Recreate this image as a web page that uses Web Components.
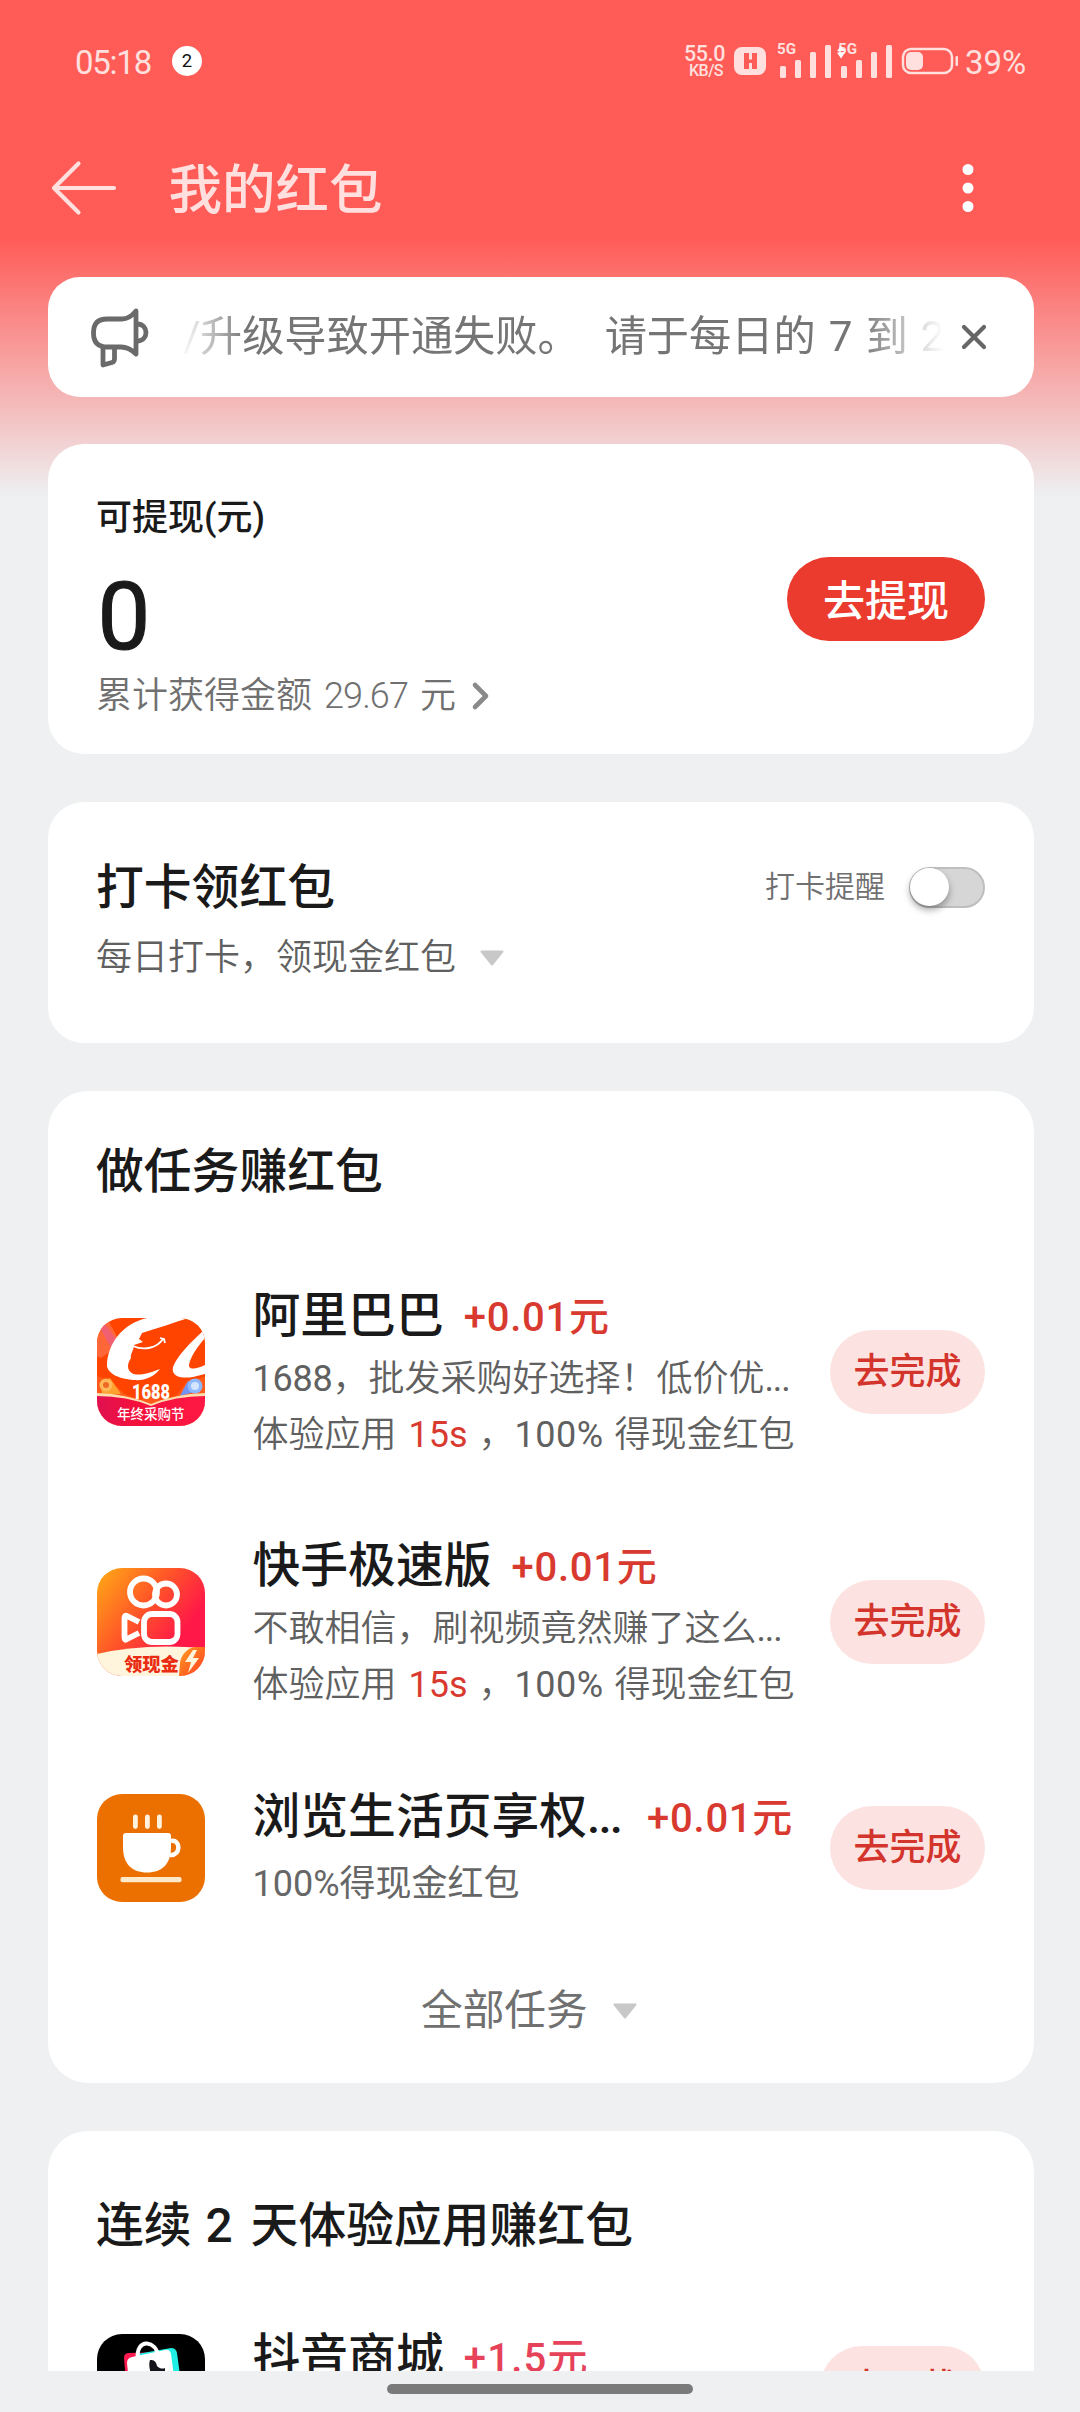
<!DOCTYPE html>
<html lang="zh-CN">
<head>
<meta charset="utf-8">
<title>我的红包</title>
<style>
html,body{margin:0;padding:0}
body{width:1080px;height:2412px;overflow:hidden;display:flex;flex-direction:column;
  font-family:Roboto,"Noto Sans CJK SC",sans-serif;color:#1a1a1a;
  background:linear-gradient(#ff5b57 0,#ff5b57 238px,#eef0f2 497px,#eef0f2 100%)}
main{flex:1;min-height:0;box-sizing:border-box;overflow:hidden;display:flex;flex-direction:column;gap:48px;padding:23px 46px 0 48px}
rp-notice{margin-bottom:-1px}
</style>
</head>
<body>
<rp-status-bar time="05:18" count="2" level="39%"></rp-status-bar>
<rp-title-bar>我的红包</rp-title-bar>
<main>
  <rp-notice></rp-notice>
  <rp-balance></rp-balance>
  <rp-checkin></rp-checkin>
  <rp-card style="height:992px;--top:51px">
    <span slot="heading">做任务赚红包</span>
    <rp-task icon="alibaba" style="margin-top:84px">
      <span slot="name">阿里巴巴</span><fit-text slot="amount" w="146">+0.01元</fit-text>
      <span slot="desc"><fit-text w="80">1688</fit-text>，批发采购好选择！低价优<fit-text w="25">...</fit-text></span>
      <span slot="rule">体验应用<fit-text w="12"> </fit-text><fit-text class="hot" w="59">15s</fit-text><fit-text w="11"> </fit-text>，<fit-text w="89">100%</fit-text><fit-text w="11"> </fit-text>得现金红包</span>
      <span slot="action">去完成</span>
    </rp-task>
    <rp-task icon="kuaishou" style="margin-top:78px">
      <span slot="name">快手极速版</span><fit-text slot="amount" w="146">+0.01元</fit-text>
      <span slot="desc">不敢相信，刷视频竟然赚了这么<fit-text w="25">...</fit-text></span>
      <span slot="rule">体验应用<fit-text w="12"> </fit-text><fit-text class="hot" w="59">15s</fit-text><fit-text w="11"> </fit-text>，<fit-text w="89">100%</fit-text><fit-text w="11"> </fit-text>得现金红包</span>
      <span slot="action">去完成</span>
    </rp-task>
    <rp-task icon="cup" compact style="margin-top:77px">
      <span slot="name">浏览生活页享权<fit-text w="34">...</fit-text><fit-text w="6"> </fit-text></span><fit-text slot="amount" w="146">+0.01元</fit-text>
      <span slot="desc"><fit-text w="87">100%</fit-text>得现金红包</span>
      <span slot="action">去完成</span>
    </rp-task>
    <rp-more>全部任务</rp-more>
  </rp-card>
  <rp-card style="height:992px;flex:none;--top:65px">
    <span slot="heading">连续<fit-text w="14"> </fit-text><fit-text w="32">2</fit-text><fit-text w="13"> </fit-text>天体验应用赚红包</span>
    <rp-task icon="bag" compact style="margin-top:69px;--amount:#e6425a;--pad:28.5px">
      <span slot="name">抖音商城</span><fit-text slot="amount" w="125">+1.5元</fit-text>
      <span slot="action">去下载</span>
    </rp-task>
  </rp-card>
</main>
<rp-nav></rp-nav>

<script>
class Base extends HTMLElement{
  constructor(){super();this.attachShadow({mode:'open'})}
  connectedCallback(){this.shadowRoot.innerHTML=`<style>:host,*{box-sizing:border-box}svg{display:block;flex:none}${this.css()}</style>${this.html()}`;this.ready&&this.ready()}
  css(){return ''} html(){return '<slot></slot>'}
}
const def=(n,c)=>customElements.define(n,c);

/* Inline run whose tracking is adjusted so that it occupies the width in "w". */
def('fit-text',class extends Base{
  css(){return `:host{display:inline-block;white-space:pre}`}
  ready(){
    const n=this.textContent.length,w=+this.getAttribute('w');
    const nat=this.getBoundingClientRect().width;
    this.style.letterSpacing=(w-nat)/n+'px';
  }
});

def('rp-status-bar',class extends Base{
  css(){return `:host{display:flex;align-items:center;height:122px;flex:none;padding:0 54px 0 75px;color:#ffe0de}
   .t{font-size:33px;line-height:40px;padding-top:4px}
   .n{width:30px;height:30px;border-radius:50%;background:#fff;color:#111;font-size:18.5px;line-height:31px;text-align:center;margin-left:20px}
   .sp{flex:1}.net{display:flex;flex-direction:column;align-items:flex-end;font-weight:500}
   .net b{font:500 21.5px/18px Roboto}.net i{font:500 16px/13px Roboto;padding:1px 2px 0 0}
   .h{margin-left:9px}.sig{margin-left:11px}.bat{margin-left:8px}.p{padding-top:4px;font-size:33px;line-height:40px;margin-left:6px}`}
  html(){
    const bars=x=>[[0,67],[15,61],[30,53],[45,46]].map(([d,y])=>`<rect x="${x+d}" y="${y-44}" width="6" height="${79-y}" rx="1.5"/>`).join('');
    return `<span class="t"><fit-text w="76">${this.getAttribute('time')}</fit-text></span><span class="n" style="margin-left:21px">${this.getAttribute('count')}</span><span class="sp"></span>
    <span class="net"><b><fit-text w="41">55.0</fit-text></b><i><fit-text w="34">KB/S</fit-text></i></span>
    <svg class="h" width="32" height="28" viewBox="0 0 32 28" fill="#ffe0de"><rect width="32" height="28" rx="8"/><path d="M10 6h5v6.500h3V6h5v16h-5v-6h-3v6h-5z" fill="#ff5b57"/></svg>
    <svg class="sig" width="116" height="36" viewBox="776 0 116 36" fill="#ffe0de">${bars(779)}${bars(840)}
     <text x="776" y="11" font-family="Roboto" font-weight="700" font-size="14.500" textLength="19" lengthAdjust="spacingAndGlyphs">5G</text>
     <text x="837" y="11" font-family="Roboto" font-weight="700" font-size="14.500" textLength="19" lengthAdjust="spacingAndGlyphs">5G</text>
     <path d="M840 3l4 5h-8zM836 9.500h8l-4 6z" fill="#fff"/></svg>
    <svg class="bat" width="58" height="28" viewBox="0 0 58 28" fill="#ffe0de"><rect x="2" y="2" width="49" height="24" rx="8" fill="none" stroke="#ffe0de" stroke-width="2.500"/><rect x="5" y="5" width="17" height="18" rx="5"/><rect x="54.500" y="9" width="2.500" height="10" rx="1"/></svg>
    <span class="p"><fit-text w="61">${this.getAttribute('level')}</fit-text></span>`}
});

def('rp-title-bar',class extends Base{
  css(){return `:host{display:flex;align-items:center;height:132px;flex:none;padding:0 104px 0 50px;color:#ffe0de}
   h1{margin:0 0 0 48.500px;font-size:53.500px;line-height:70px;font-weight:500;flex:1;padding-top:6px}`}
  html(){return `<svg width="70" height="56" viewBox="0 0 70 56" fill="none" stroke="#ffe0de" stroke-width="4.200" stroke-linecap="round" stroke-linejoin="round"><path d="M28.500 3.500L4 28l24.500 24.500M4 28h60"/></svg>
   <h1><slot></slot></h1><svg width="16" height="56" viewBox="0 0 16 56" fill="#fff"><circle cx="8" cy="9.500" r="5.500"/><circle cx="8" cy="28" r="5.500"/><circle cx="8" cy="46.500" r="5.500"/></svg>`}
});

def('rp-notice',class extends Base{
  css(){return `:host{display:flex;align-items:center;height:120px;flex:none;background:#fff;border-radius:32px;padding:0 45px 0 41px;color:#757575}
   .w{flex:1;margin:0 15px 0 30px;overflow:hidden;white-space:nowrap;font-size:42.200px;line-height:60px;padding-left:2px;
     -webkit-mask-image:linear-gradient(90deg,transparent 0,#000 65px,#000 calc(100% - 85px),transparent)}`}
  html(){return `<svg width="62" height="66" viewBox="0 0 62 66" fill="none" stroke="#6a6a6a" stroke-width="4.800" stroke-linejoin="round" stroke-linecap="round">
     <path d="M33 15H18C8 15 4.500 21 4.500 29s3.500 14 13.500 14h14c7 0 11 3 15 7V7c-4 5-8 8-14 8z"/><path d="M48 20c12 0 12 17 0 17M14 43.500V61l9-2.500c2-.6 2.500-2 2.500-4V44"/></svg>
   <div class="w"><fit-text w="17">/</fit-text>升级导致开通失败。<fit-text w="25"> </fit-text>请于每日的<fit-text w="13"> </fit-text><fit-text w="24">7</fit-text><fit-text w="13"> </fit-text>到<fit-text w="13"> </fit-text><fit-text w="24">2</fit-text></div>
   <svg width="30" height="30" viewBox="0 0 30 30" stroke="#666" stroke-width="4.200" stroke-linecap="round"><path d="M5 5l20 20M25 5L5 25"/></svg>`}
});

def('rp-card',class extends Base{
  css(){return `:host{display:block;flex:none;background:#fff;border-radius:40px;padding:var(--top) 49px 0 49px}
   .hd{font-size:47.800px;line-height:61px;height:60px;font-weight:500;white-space:nowrap;margin-left:-1px}`}
  html(){return `<div class="hd"><slot name="heading"></slot></div><slot></slot>`}
});

def('rp-pill',class extends Base{
  css(){return `:host{display:flex;align-items:center;justify-content:center;flex:none;height:84px;border-radius:42px;background:#fce3e1;color:#d3352c;font-size:36px;font-weight:500;line-height:40px;white-space:nowrap;padding:0 var(--pad,23.500px)}
   :host([solid]){background:#eb3a2e;color:#fff;font-size:42px;padding:6px 36px 0}`}
});

def('rp-caret',class extends Base{
  css(){return `:host{display:block;flex:none}`}
  html(){return `<svg width="26" height="18" viewBox="0 0 26 18"><path d="M2.500 2.500h21L13 15.500z" fill="#c8c8c8" stroke="#c8c8c8" stroke-width="2" stroke-linejoin="round"/></svg>`}
});

def('rp-balance',class extends Base{
  css(){return `:host{display:flex;align-items:center;justify-content:space-between;flex:none;height:310px;background:#fff;border-radius:36px;padding:0 49px}
   .c{height:310px;padding-top:48px;margin-left:-1px}.a{font-size:36px;line-height:52px;height:50px;font-weight:500;color:#1a1a1a}
   .z{font-size:94px;line-height:125px;height:120px;margin:13px 0 0 1.500px;font-weight:400;-webkit-text-stroke:1.200px #1a1a1a}
   .s{display:flex;align-items:center;height:42px;font-size:36px;line-height:42px;font-weight:350;color:#707070;white-space:pre}svg{margin-left:15px}`}
  html(){return `<div class="c"><div class="a">可提现(元)</div><div class="z">0</div><div class="s"><span>累计获得金额<fit-text w="12"> </fit-text><fit-text w="84">29.67</fit-text><fit-text w="12"> </fit-text>元</span><svg width="20" height="30" viewBox="0 0 20 30" fill="none" stroke="#8a8a8a" stroke-width="4.600" stroke-linecap="round" stroke-linejoin="round"><path d="M4 4l11 11L4 26"/></svg></div></div>
   <rp-pill solid>去提现</rp-pill>`}
});

def('rp-checkin',class extends Base{
  css(){return `:host{display:block;flex:none;height:241px;background:#fff;border-radius:36px;padding:55px 49px 0}
   .r{display:flex;align-items:center;height:60px}.t{flex:1;font-size:47.800px;font-weight:500;line-height:60px;padding-top:2px;margin-left:-1px}
   .l{font-size:30px;font-weight:350;line-height:40px;color:#707070;margin-right:24px}
   .sw{width:76px;height:41px;border-radius:21px;background:#d6d6d6;border:2px solid #bebebe;display:flex;align-items:center}
   .k{width:39px;height:38px;border-radius:50%;background:#fff;box-shadow:0 4px 7px rgba(0,0,0,.35);margin-left:-1px}
   .s{display:flex;align-items:center;height:56px;margin:13px 0 0 -1px;gap:23px;font-size:36px;line-height:56px;font-weight:350;color:#606060}`}
  html(){return `<div class="r"><span class="t">打卡领红包</span><span class="l">打卡提醒</span><span class="sw"><span class="k"></span></span></div>
   <div class="s">每日打卡，领现金红包<rp-caret></rp-caret></div>`}
});

def('rp-more',class extends Base{
  css(){return `:host{display:flex;align-items:center;height:60px;margin:70px 0 0 324px;gap:24px;font-size:41.700px;line-height:60px;color:#707070}`}
  html(){return `<slot></slot><rp-caret></rp-caret>`}
});

const ICONS={
alibaba:`<rect width="108" height="108" fill="#ff4400"/>
 <path d="M0 6L10 0 24 26 4 40 0 38z" fill="#ff6638"/><path d="M3 10L8 6 20 22 14 30z" fill="#e65a9a" opacity=".6"/>
 <path d="M50 0H92C78 4 62 10 45 15L42 21 46 24 37 27C37 32 33 36 34 40C29 47 30 55 39 56.500C48 57 55 54 63 51C57 59 47 63 37 62C20 61 9 54 10 46C11 27 24 6 50 0z" fill="#fff"/>
 <path d="M36 28C47 33 60 30 66 21M63 20l4 1 1 4" fill="none" stroke="#fff" stroke-width="1.800"/>
 <path d="M86 0h12c5 2 8 5 8 9-4-4-10-7-20-9z" fill="#fff"/>
 <path d="M108 11C94 24 80 38 76 49C74 58 83 61 96 59L108 56V47C100 51 93 52 92 48C92 41 100 29 108 20z" fill="#fff"/>
 <path d="M0 58L12 62 28 76 44 82 54 66 64 82 80 77 91 62 108 59V86H0z" fill="#ff5a18"/>
 <path d="M4 64l9-4 11 16-19 1z" fill="#ffa12e"/><circle cx="9" cy="67" r="6.500" fill="#ffb95a"/><circle cx="9" cy="67" r="3" fill="#ee6a24"/>
 <path d="M83 78l8-15 10 10z" fill="#7295f5"/><circle cx="98" cy="68" r="7.500" fill="#8fb8ff"/><circle cx="98" cy="68" r="4" fill="#d4e6ff"/>
 <path d="M0 75Q30 76 54 86Q78 76 108 75V108H0z" fill="#ffdcae"/><path d="M0 78Q30 78 54 88Q78 78 108 78V108H0z" fill="url(#ga)"/>
 <defs><linearGradient id="ga"><stop stop-color="#e01050"/><stop offset=".35" stop-color="#f3113c"/><stop offset="1" stop-color="#ff1845"/></linearGradient></defs>
 <text x="35" y="81" font-family="Roboto" font-weight="900" font-size="20" fill="#fff" textLength="38" lengthAdjust="spacingAndGlyphs">1688</text>
 <text x="20" y="101" font-family="Noto Sans CJK SC" font-weight="500" font-size="13.500" fill="#fff">年终采购节</text>`,
kuaishou:`<defs><linearGradient id="gk" x1="0" y1="0" x2="1" y2=".75"><stop stop-color="#ffad15"/><stop offset=".45" stop-color="#ff5528"/><stop offset=".8" stop-color="#ff1848"/></linearGradient><linearGradient id="gb" x1="0" y1="0" x2="1" y2="1"><stop stop-color="#ffa020"/><stop offset="1" stop-color="#ff3a20"/></linearGradient></defs>
 <rect width="108" height="108" fill="url(#gk)"/>
 <g fill="none" stroke="#fff" stroke-width="5.800"><circle cx="46.500" cy="24" r="13.500"/><circle cx="69" cy="26.500" r="11"/><rect x="47" y="46" width="33.500" height="28" rx="8"/><path d="M42 54L30 48Q27.500 47 27.500 50V69Q27.500 73 30 71L42 65" stroke-linejoin="round"/></g>
 <path d="M0 86Q45 75 108 80V108H0z" fill="#fff5dc"/>
 <text x="27" y="103" font-family="Noto Sans CJK SC" font-weight="900" font-size="18.300" fill="#ea2c12">领现金</text>
 <path d="M108 79H98C90 80 84 87 83 95L82 108H108z" fill="url(#gb)"/><path d="M96 82L88 94h6l-3 11 11-15h-6l4-8z" fill="#fff5dc"/>`,
cup:`<rect width="108" height="108" fill="#eb7000"/><g fill="#fff3e0"><rect x="36" y="20.500" width="4.800" height="14.500" rx="2.400"/><rect x="48" y="20.500" width="4.800" height="14.500" rx="2.400"/><rect x="60" y="20.500" width="4.800" height="14.500" rx="2.400"/></g>
 <path d="M26 42q0-3 3-3h42q3 0 3 3v11c0 17-9 25.500-24 25.500S26 70 26 53z" fill="#fff"/><path d="M74 47c10-2 10 15-1 14" fill="none" stroke="#fff" stroke-width="4.500"/><rect x="23.500" y="83" width="61" height="5.200" rx="2" fill="#ffe9c8"/>`,
bag:`<rect width="108" height="108" fill="#000"/><path d="M27 24q0-5 5-5l40-1v90H34z" fill="#ff1a50"/><path d="M40 20l34-6q5 0 6 5l12 89H50z" fill="#20eee4"/><path d="M30 29q0-5 5-6l33-7q5-1 6 4l12 88H38z" fill="#fff"/><path d="M41 27C39 14 45 9 50 9.500S60 14 61 22" fill="none" stroke="#fff" stroke-width="4"/><path d="M53 26c4 0 6 1 7 6 3 3 6 3 8 2v9c-3 0-5-1-7-2v25h-8V36c-1-4-1-7 0-10z" fill="#14131c"/>`};

def('rp-task',class extends Base{
  css(){return `:host{display:flex;align-items:center;height:172px}
   :host([compact]){height:126px}
   .ic{width:107.500px;height:108px;border-radius:25px;overflow:hidden;flex:none}
   .b{flex:1;min-width:0;height:100%;margin-left:48px;white-space:nowrap}
   .t{display:flex;height:60px;line-height:60px;font-size:47.800px;font-weight:500;gap:20px}
   .amt{font-size:40px;line-height:63px;color:var(--amount,#d93a30)}
   .d{height:66px;line-height:66px;font-size:36px;font-weight:350;color:#606060}.r{height:46px;line-height:46px;font-size:36px;font-weight:350;color:#606060}
   :host([compact]) .t{line-height:64px}:host([compact]) .amt{line-height:67px}
   :host([compact]) .d{padding-top:11px;line-height:56px;font-weight:400;color:#666}
   :host([compact]) .r{display:none}`}
  html(){return `<div class="ic"><svg width="108" height="108" viewBox="0 0 108 108">${ICONS[this.getAttribute('icon')]}</svg></div>
   <div class="b"><div class="t"><slot name="name"></slot><span class="amt"><slot name="amount"></slot></span></div><div class="d"><slot name="desc"></slot></div><div class="r"><slot name="rule"></slot></div></div>
   <rp-pill><slot name="action"></slot></rp-pill>`}
  ready(){
    this.querySelectorAll('[slot=desc] fit-text,[slot=rule] fit-text').forEach(e=>{e.style.fontWeight=400});
    this.querySelectorAll('.hot').forEach(e=>{e.style.color='#d93a30'});
  }
});

def('rp-nav',class extends Base{
  css(){return `:host{display:flex;justify-content:center;flex:none;height:41px;padding-top:13px;background:#eef0f2}i{width:306px;height:10px;border-radius:5px;background:#7a7a7a}`}
  html(){return `<i></i>`}
});

/* Slotted runs are measured again once every component's styles apply. */
const refit=r=>r.querySelectorAll('*').forEach(e=>{if(e.localName==='fit-text'){e.style.letterSpacing='0';e.ready()}if(e.shadowRoot)refit(e.shadowRoot)});
refit(document);
</script>
</body>
</html>
